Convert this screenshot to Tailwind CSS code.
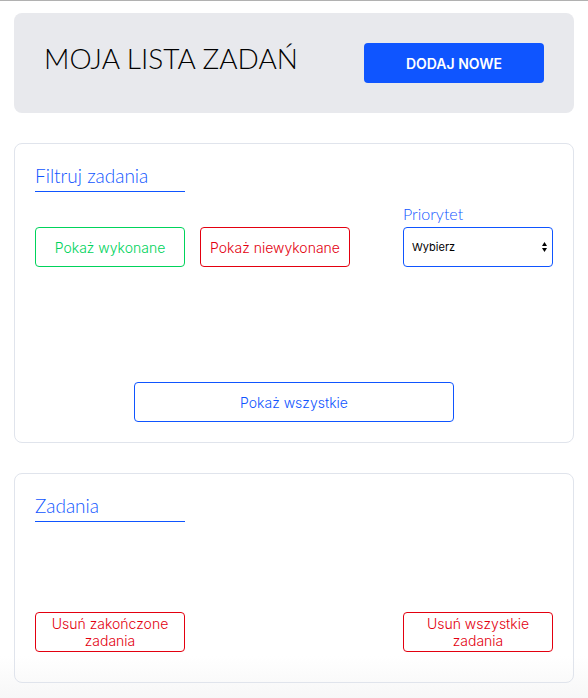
<!DOCTYPE html>
<html lang="pl">
<head>
<meta charset="utf-8">
<meta name="viewport" content="width=device-width, initial-scale=1">
<title>Moja lista zadań</title>
<script src="https://cdn.jsdelivr.net/npm/@tailwindcss/browser@4"></script>
</head>
<body class="min-h-screen border-t border-[#b1b1b1] bg-linear-to-b from-white from-94% to-[#f7f7f7] font-['Inter',sans-serif] text-[14px] font-light">
<div class="flex flex-col gap-[30px] px-[14px] pt-3">
  <header class="flex items-start justify-between rounded-lg bg-[#e8e9ed] p-[30px]">
    <h1 class="font-['Lato',sans-serif] text-[28px] leading-[30px] font-light text-black">MOJA LISTA ZADAŃ</h1>
    <button type="button" class="h-10 w-[180px] rounded bg-[#0f55ff] font-semibold text-white">DODAJ NOWE</button>
  </header>
  <main class="flex flex-col gap-[30px]">
    <section class="flex flex-col rounded-lg border border-[#e0e4ec] p-5">
      <h2 class="w-[150px] border-b border-[#0f55ff] pb-1 font-['Lato',sans-serif] text-[19px] leading-[23px] font-light text-[#0f55ff]">Filtruj zadania</h2>
      <div class="mt-3 flex items-end gap-[15px]">
        <button type="button" class="h-10 w-[150px] rounded border border-[#00d35b] text-[#00d35b]">Pokaż wykonane</button>
        <button type="button" class="h-10 w-[150px] rounded border border-[#e3000f] text-[#e3000f]">Pokaż niewykonane</button>
        <div class="ml-auto flex w-[150px] flex-col gap-1">
          <label for="priority" class="font-['Lato',sans-serif] text-[16px] leading-[19px] font-light text-[#0f55ff]">Priorytet</label>
          <div class="relative">
            <select id="priority" class="block h-10 w-full appearance-none rounded border border-[#0f55ff] bg-white px-2 text-[11px] font-normal text-black">
              <option>Wybierz</option>
            </select>
            <svg class="pointer-events-none absolute top-[15px] right-[6px] h-[10px] w-[5px]" viewBox="0 0 5 10" aria-hidden="true"><path d="M2.5 0 5 4H0zM0 6h5L2.5 10z"/></svg>
          </div>
        </div>
      </div>
      <button type="button" class="mt-[115px] h-10 w-[320px] self-center rounded border border-[#0f55ff] text-[#0f55ff]">Pokaż wszystkie</button>
    </section>
    <section class="rounded-lg border border-[#e0e4ec] px-5 pt-5 pb-[30px]">
      <h2 class="w-[150px] border-b border-[#0f55ff] pb-1 font-['Lato',sans-serif] text-[19px] leading-[23px] font-light text-[#0f55ff]">Zadania</h2>
      <div class="mt-[90px] flex justify-between leading-[17px]">
        <button type="button" class="h-10 w-[150px] rounded border border-[#e3000f] px-3 text-[#e3000f]">Usuń zakończone zadania</button>
        <button type="button" class="h-10 w-[150px] rounded border border-[#e3000f] px-3 text-[#e3000f]">Usuń wszystkie zadania</button>
      </div>
    </section>
  </main>
</div>
</body>
</html>
